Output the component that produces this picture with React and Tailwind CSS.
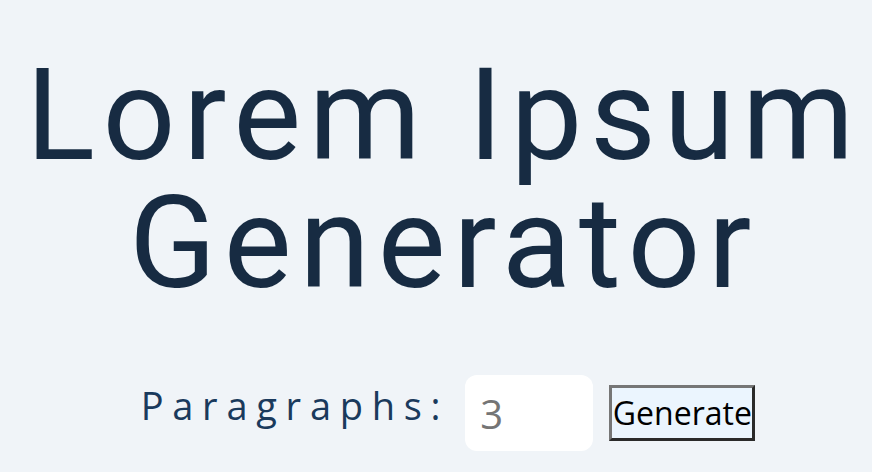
import React from "react";

export default function App() {
  return (
    <div className="min-h-screen w-full bg-[#f0f4f8] overflow-hidden">
      <h1 className="pt-[51px] pl-[16px] text-center font-['Roboto',sans-serif] text-[128px] leading-none tracking-[0.06em] text-[#172b42]">
        Lorem Ipsum
        <br />
        Generator
      </h1>
      <div className="mt-[68px] flex items-center justify-center gap-4 pl-[24px] font-['Open_Sans',sans-serif]">
        <label className="mb-[16px] text-[38px] tracking-[0.23em] text-[#1a3a5c]">
          Paragraphs:
        </label>
        <input
          type="number"
          defaultValue={3}
          className="h-[76px] w-[128px] rounded-xl bg-white pl-[15px] font-['Open_Sans',sans-serif] text-[40px] text-[#757575] outline-none [appearance:textfield]"
        />
        <button className="flex h-[56px] w-[146px] items-center justify-center border-[3px] border-t-[#767676] border-l-[#767676] border-b-[#2a2a2a] border-r-[#2a2a2a] bg-[#ebf5fe] font-['Open_Sans',sans-serif] text-[32px] leading-none text-black">
          Generate
        </button>
      </div>
    </div>
  );
}
